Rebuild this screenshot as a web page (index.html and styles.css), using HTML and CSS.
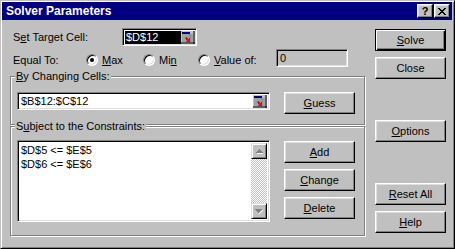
FILE: index.html
```html
<!DOCTYPE html>
<html>
<head>
<meta charset="utf-8">
<link rel="stylesheet" href="styles.css">
</head>
<body>
<div class="window">
  <div class="titlebar">
    <span class="title">Solver Parameters</span>
    <div class="tb-buttons">
      <button class="tb-btn tb-help">?</button>
      <button class="tb-btn tb-close"><svg width="8" height="7" viewBox="0 0 8 7"><path d="M0 0h2v1h1v1h2V1h1V0h2v1H7v1H6v1H5v1h1v1h1v1h1v1H6V6H5V5H3v1H2v1H0V6h1V5h1V4h1V3H2V2H1V1H0z" fill="#000"/></svg></button>
    </div>
  </div>
  <div class="content">
    <div class="main">
      <div class="row row-target">
        <span class="lbl lbl-target">S<u>e</u>t Target Cell:</span>
        <div class="field field-target">
          <span class="sel">$D$12</span>
          <span class="refbtn"><svg width="14" height="13" viewBox="0 0 14 13"><rect x="0" y="0" width="14" height="13" fill="#c0c0c0"/><rect x="1" y="1" width="8" height="2" fill="#000080"/><path d="M1 4h11M1 6h11M1 8h11M1 10h11" stroke="#808080" stroke-width="1"/><path d="M9 3v9" stroke="#808080"/><path d="M13 0v13M0 12h14" stroke="#000"/><path d="M5 6h1v1h1v1h1v-1h1v4h-4v-1h1v-1h-1v-1h-1z" fill="#ff0000"/></svg></span>
        </div>
      </div>
      <div class="row row-equal">
        <span class="lbl lbl-equal">Equal To:</span>
        <span class="radio-item r-max"><span class="radio checked"></span><span class="rtext"><u>M</u>ax</span></span>
        <span class="radio-item r-min"><span class="radio"></span><span class="rtext">Mi<u>n</u></span></span>
        <span class="radio-item r-val"><span class="radio"></span><span class="rtext"><u>V</u>alue of:</span></span>
        <div class="field field-value">0</div>
      </div>
      <div class="group group-changing">
        <span class="group-label"><u>B</u>y Changing Cells:</span>
        <div class="group-row">
          <div class="field field-changing">
            <span class="ftext">$B$12:$C$12</span>
            <span class="refbtn"><svg width="14" height="13" viewBox="0 0 14 13"><rect x="0" y="0" width="14" height="13" fill="#c0c0c0"/><rect x="1" y="1" width="8" height="2" fill="#000080"/><path d="M1 4h11M1 6h11M1 8h11M1 10h11" stroke="#808080" stroke-width="1"/><path d="M9 3v9" stroke="#808080"/><path d="M13 0v13M0 12h14" stroke="#000"/><path d="M5 6h1v1h1v1h1v-1h1v4h-4v-1h1v-1h-1v-1h-1z" fill="#ff0000"/></svg></span>
          </div>
          <button class="btn"><u>G</u>uess</button>
        </div>
      </div>
      <div class="group group-constraints">
        <span class="group-label">S<u>u</u>bject to the Constraints:</span>
        <div class="group-row">
          <div class="field listbox">
            <div class="list-items">
              <div class="item">$D$5 &lt;= $E$5</div>
              <div class="item">$D$6 &lt;= $E$6</div>
            </div>
            <div class="scrollbar">
              <span class="sb-btn"><svg width="7" height="5" viewBox="0 0 7 5"><path d="M3 0h1v1h1v1h1v1h1v1H0V3h1V2h1V1h1z" fill="#808080"/><path d="M1 4h7v1H1z" fill="#fff"/></svg></span>
              <span class="sb-track"></span>
              <span class="sb-btn"><svg width="8" height="5" viewBox="0 0 8 5"><path d="M0 0h7v1H6v1H5v1H4v1H3V3H2V2H1V1H0z" fill="#808080"/><path d="M7 1h1v1H7zM6 2h1v1H6zM5 3h1v1H5zM4 4h1v1H4z" fill="#fff"/></svg></span>
            </div>
          </div>
          <div class="btn-col">
            <button class="btn"><u>A</u>dd</button>
            <button class="btn"><u>C</u>hange</button>
            <button class="btn"><u>D</u>elete</button>
          </div>
        </div>
      </div>
    </div>
    <div class="side">
      <button class="btn btn-default b-solve"><u>S</u>olve</button>
      <button class="btn b-close">Close</button>
      <button class="btn b-options"><u>O</u>ptions</button>
      <button class="btn b-reset"><u>R</u>eset All</button>
      <button class="btn b-help"><u>H</u>elp</button>
    </div>
  </div>
</div>
</body>
</html>
```
FILE: styles.css
```css
html, body {
  margin: 0;
  padding: 0;
  background: #c0c0c0;
}
body {
  font-family: "Liberation Sans", Arial, sans-serif;
  font-size: 11px;
  color: #000;
}
.window {
  width: 455px;
  height: 249px;
  box-sizing: border-box;
  background: #c0c0c0;
  border: 1px solid;
  border-color: #c0c0c0 #000 #000 #c0c0c0;
  box-shadow: inset 1px 1px 0 #fff, inset -1px -1px 0 #808080;
  padding: 1px;
  display: flex;
  flex-direction: column;
}
.titlebar {
  height: 18px;
  margin-right: 1px;
  background: #000080;
  color: #fff;
  display: flex;
  align-items: center;
  justify-content: space-between;
  padding-left: 4px;
}
.title {
  font-weight: bold;
  font-size: 12px;
}
.tb-buttons {
  display: flex;
  gap: 1px;
  margin-right: 2px;
}
.tb-btn {
  width: 16px;
  height: 14px;
  box-sizing: border-box;
  padding: 0;
  margin: 0;
  background: #c0c0c0;
  border: 1px solid;
  border-color: #fff #000 #000 #fff;
  box-shadow: inset -1px -1px 0 #808080, inset 1px 1px 0 #dfdfdf;
  display: flex;
  align-items: center;
  justify-content: center;
  font-family: "Liberation Sans", Arial, sans-serif;
  font-weight: bold;
  font-size: 11px;
  color: #000;
  line-height: 1;
}
.tb-close svg {
  display: block;
}
.content {
  flex: 1;
  display: flex;
}
.main {
  width: 356px;
  margin-left: 8px;
  padding-top: 8px;
  display: flex;
  flex-direction: column;
}
.row {
  display: flex;
  align-items: center;
  height: 18px;
}
.lbl {
  padding-left: 3px;
  box-sizing: border-box;
}
.lbl-target {
  width: 112px;
}
.lbl-equal {
  width: 76px;
  padding-top: 4px;
}
.row-equal {
  margin-top: 3px;
}
.field {
  box-sizing: border-box;
  background: #fff;
  border: 1px solid;
  border-color: #808080 #fff #fff #808080;
  box-shadow: inset 1px 1px 0 #000, inset -1px -1px 0 #dfdfdf;
  height: 18px;
}
.field-target {
  width: 75px;
  display: flex;
  align-items: stretch;
  padding: 2px 1px 1px 2px;
}
.sel {
  background: #000;
  color: #fff;
  flex: 1;
  line-height: 13px;
  padding-left: 1px;
}
.refbtn {
  width: 14px;
  display: flex;
  align-items: center;
}
.refbtn svg {
  display: block;
}
.radio-item {
  display: flex;
  align-items: center;
  gap: 4px;
  padding-top: 4px;
}
.r-max { width: 57px; }
.r-min { width: 55px; }
.r-val { width: 78px; }
.radio {
  width: 12px;
  height: 12px;
  box-sizing: border-box;
  border-radius: 50%;
  background: #fff;
  border: 1px solid;
  border-color: #808080 #fff #fff #808080;
  box-shadow: inset 1px 1px 0 #000, inset -1px -1px 0 #dfdfdf;
  position: relative;
  flex: none;
}
.radio.checked::after {
  content: "";
  position: absolute;
  left: 3px;
  top: 3px;
  width: 4px;
  height: 4px;
  border-radius: 50%;
  background: #000;
}
.field-value {
  width: 72px;
  background: #c0c0c0;
  padding-left: 3px;
  line-height: 16px;
}
.group {
  position: relative;
  box-sizing: border-box;
  border: 1px solid #808080;
  box-shadow: inset 1px 1px 0 #fff, 1px 1px 0 #fff;
  width: 355px;
  padding-left: 6px;
}
.group-changing {
  margin-top: 9px;
  height: 49px;
  padding-top: 15px;
}
.group-constraints {
  margin-top: 1px;
  height: 110px;
  padding-top: 13px;
}
.group-label {
  position: absolute;
  left: 4px;
  top: -8px;
  background: #c0c0c0;
  padding: 0 1px;
  line-height: 14px;
}
.group-row {
  display: flex;
  align-items: flex-start;
  gap: 14px;
}
.field-changing {
  width: 253px;
  display: flex;
  align-items: stretch;
  padding: 2px 2px 1px 2px;
}
.ftext {
  flex: 1;
  padding-left: 1px;
  line-height: 13px;
}
.btn {
  width: 71px;
  height: 22px;
  box-sizing: border-box;
  padding: 0;
  margin: 0;
  background: #c0c0c0;
  border: 1px solid;
  border-color: #fff #000 #000 #fff;
  box-shadow: inset -1px -1px 0 #808080, inset 1px 1px 0 #dfdfdf;
  font-family: "Liberation Sans", Arial, sans-serif;
  font-size: 11px;
  color: #000;
  display: block;
}
.btn-default {
  border-color: #000;
  box-shadow: inset 1px 1px 0 #fff, inset -1px -1px 0 #000, inset -2px -2px 0 #808080;
}
.listbox {
  width: 253px;
  height: 82px;
  display: flex;
  padding: 2px;
}
.list-items {
  flex: 1;
  padding-left: 1px;
}
.item {
  line-height: 14px;
}
.scrollbar {
  width: 16px;
  display: flex;
  flex-direction: column;
}
.sb-btn {
  width: 16px;
  height: 16px;
  box-sizing: border-box;
  background: #c0c0c0;
  border: 1px solid;
  border-color: #dfdfdf #000 #000 #dfdfdf;
  box-shadow: inset 1px 1px 0 #fff, inset -1px -1px 0 #808080;
  display: flex;
  align-items: center;
  justify-content: center;
}
.sb-btn svg {
  display: block;
}
.sb-track {
  flex: 1;
  background: repeating-conic-gradient(#c0c0c0 0 25%, #fff 0 50%) 0 0 / 2px 2px;
}
.btn-col {
  display: flex;
  flex-direction: column;
  gap: 6px;
  padding-top: 1px;
}
.side {
  margin-left: 9px;
  padding-top: 9px;
  display: flex;
  flex-direction: column;
}
.b-close { margin-top: 6px; }
.b-options { margin-top: 41px; }
.b-reset { margin-top: 41px; }
.b-help { margin-top: 6px; }
```
